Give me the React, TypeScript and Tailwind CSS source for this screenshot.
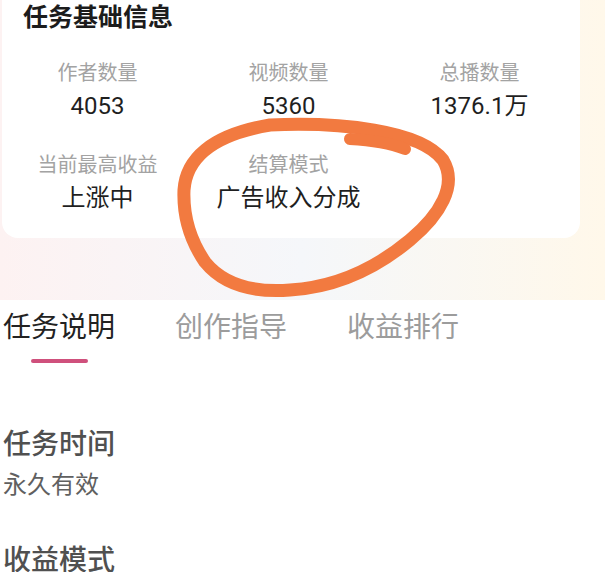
import React from "react";

const font = { fontFamily: 'Roboto, "Noto Sans CJK SC", sans-serif' };

function Stat({ label, value }: { label: string; value: string }) {
  return (
    <div className="flex flex-col items-center">
      <div className="text-[20px] leading-[28px] text-[#a3a3a3]">{label}</div>
      <div className="mt-[3px] text-[24px] leading-[32px] text-[#1f1f1f]">{value}</div>
    </div>
  );
}

export default function App() {
  return (
    <div className="relative w-[605px] h-[572px] overflow-hidden bg-white" style={font}>
      <div className="bg-gradient-to-r from-[#fdf2f2] via-[#f5f7fa] to-[#fff8ea] pb-[62px]">
        <div className="ml-[2px] mr-[25px] bg-white rounded-b-[16px] pr-[5px] pb-[24px]">
          <div className="pt-[1px] pl-[21px] text-[25px] leading-[34px] font-bold text-[#1c1c1c]">
            任务基础信息
          </div>
          <div className="mt-[24px] grid grid-cols-3">
            <Stat label="作者数量" value="4053" />
            <Stat label="视频数量" value="5360" />
            <Stat label="总播数量" value="1376.1万" />
          </div>
          <div className="mt-[29px] grid grid-cols-3">
            <Stat label="当前最高收益" value="上涨中" />
            <Stat label="结算模式" value="广告收入分成" />
            <div />
          </div>
        </div>
      </div>

      <div className="mt-[9px] flex gap-[60px] pl-[3px]">
        <div className="flex flex-col items-center">
          <div className="text-[28px] leading-[38px] text-[#222222]">任务说明</div>
          <div className="mt-[12px] h-[4px] w-[57px] rounded-full bg-[#cf507c]" />
        </div>
        <div className="text-[28px] leading-[38px] text-[#9c9c9c]">创作指导</div>
        <div className="text-[28px] leading-[38px] text-[#9c9c9c]">收益排行</div>
      </div>

      <div className="pl-[3px]">
        <div className="mt-[63px] text-[28px] leading-[38px] font-medium text-[#505050]">任务时间</div>
        <div className="mt-[5px] text-[24px] leading-[32px] text-[#606060]">永久有效</div>
        <div className="mt-[41px] text-[28px] leading-[38px] font-medium text-[#505050]">收益模式</div>
      </div>

      <svg
        className="absolute left-0 top-0 pointer-events-none"
        width="605"
        height="572"
        viewBox="0 0 605 572"
      >
        <path
          d="M 270 125 C 340 122, 420 130, 443 160 C 458 185, 440 215, 410 240 C 380 265, 340 287, 290 290 C 250 293, 222 283, 205 262 C 190 240, 183 215, 184 190 C 186 160, 210 135, 270 125"
          fill="none"
          stroke="#f27a40"
          strokeWidth="13"
          strokeLinecap="round"
          strokeLinejoin="round"
        />
        <path
          d="M 350 139 C 370 140, 390 143, 405 149"
          fill="none"
          stroke="#f27a40"
          strokeWidth="12"
          strokeLinecap="round"
        />
      </svg>
    </div>
  );
}
